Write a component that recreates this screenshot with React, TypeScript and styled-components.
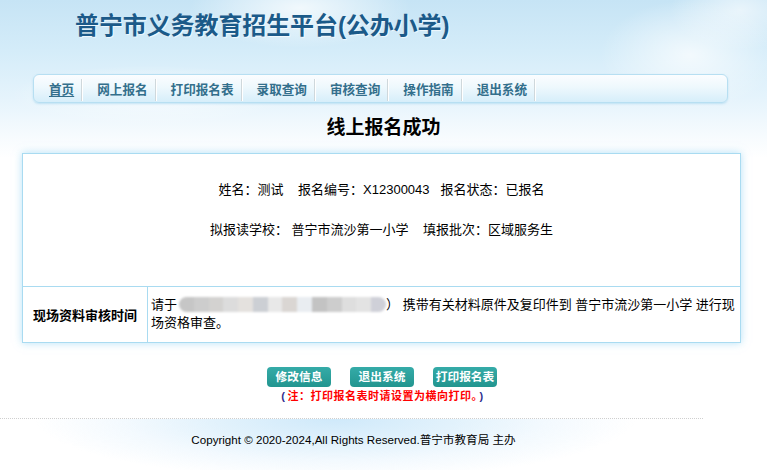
import React from "react";
import styled, { createGlobalStyle } from "styled-components";

const Global = createGlobalStyle`
  html, body { margin: 0; padding: 0; background: #fff; }
  body { font-family: "Liberation Sans", "Noto Sans CJK SC", sans-serif; color: #000; }
`;

const Page = styled.div`
  width: 767px;
  min-height: 470px;
  background:
    radial-gradient(ellipse 110px 40px at 300px 8px, rgba(255,255,255,0.75), rgba(255,255,255,0)),
    radial-gradient(ellipse 90px 55px at 690px 55px, rgba(255,255,255,0.7), rgba(255,255,255,0)),
    radial-gradient(ellipse 140px 30px at 150px 95px, rgba(255,255,255,0.6), rgba(255,255,255,0)),
    radial-gradient(ellipse 70px 40px at 740px 10px, rgba(255,255,255,0.6), rgba(255,255,255,0)),
    linear-gradient(to bottom, #c6e4f5 0px, #d4ecf9 50px, #e6f4fc 100px, #f6fbfe 135px, #ffffff 158px);
  display: flex;
  flex-direction: column;
`;

const Header = styled.header`
  padding: 11px 0 0 75px;
`;

const Title = styled.h1`
  margin: 0;
  font-size: 24px;
  line-height: 30px;
  font-weight: bold;
  color: #1b5a89;
  text-shadow: 1px 1px 1px rgba(255, 255, 255, 0.7);
  letter-spacing: -0.1px;
`;

const Nav = styled.nav`
  box-sizing: border-box;
  margin: 33px 39px 0 33px;
  height: 29px;
  border: 1px solid #b7dff2;
  border-radius: 6px;
  background: linear-gradient(to bottom, #fbfdff 0%, #eef8fd 45%, #d6eefa 100%);
  box-shadow: 0 1px 2px rgba(150, 205, 235, 0.5);
  display: flex;
  align-items: flex-start;
  padding-top: 4px;
`;

const NavItem = styled.a<{ $active?: boolean }>`
  box-sizing: border-box;
  height: 22px;
  display: flex;
  align-items: center;
  padding: 0 7px 3px 15px;
  border-right: 1px solid #cfd8dc;
  box-shadow: 1px 0 0 #ffffff;
  font-size: 12.6px;
  font-weight: bold;
  color: #336f8c;
  text-decoration: ${(p) => (p.$active ? "underline" : "none")};
  text-underline-offset: 2px;
  cursor: pointer;
  white-space: nowrap;
`;

const Heading = styled.h2`
  margin: 13px 0 0 0;
  text-align: center;
  font-size: 19px;
  line-height: 24px;
  font-weight: bold;
  color: #000;
`;

const Card = styled.section`
  margin: 13px 26px 0 22px;
  border: 1px solid #a9dbf1;
  background: #fff;
  box-shadow: 0 0 8px rgba(120, 200, 240, 0.55);
`;

const InfoBlock = styled.div`
  padding: 26px 0 46px;
  display: flex;
  flex-direction: column;
  align-items: center;
  gap: 20px;
  font-size: 13px;
  line-height: 20px;
`;

const InfoLine = styled.div`
  text-align: center;
  white-space: pre;
`;

const Row = styled.div`
  display: grid;
  grid-template-columns: 125px 1fr;
  border-top: 1px solid #a9dbf1;
  min-height: 55px;
`;

const LabelCell = styled.div`
  border-right: 1px solid #a9dbf1;
  display: flex;
  align-items: center;
  justify-content: center;
  font-size: 13px;
  font-weight: bold;
`;

const ValueCell = styled.div`
  padding: 9px 8px 10px 3px;
  font-size: 13px;
  line-height: 18px;
  white-space: nowrap;
`;

const Blur = styled.span`
  display: inline-flex;
  vertical-align: -3px;
  width: 207px;
  height: 15px;
  border-radius: 8px;
  overflow: hidden;
  filter: blur(0.8px);
  margin-left: 2px;
`;

const BlurSeg = styled.span<{ $shade: string }>`
  flex: 1;
  background: ${(p) => p.$shade};
`;

const Actions = styled.div`
  margin-top: 24px;
  display: flex;
  justify-content: center;
  gap: 19px;
  padding-right: 3px;
`;

const Button = styled.button`
  width: 64px;
  height: 20px;
  padding: 0;
  border: none;
  border-radius: 4px;
  background: linear-gradient(to bottom, #35aba8 0%, #22958f 100%);
  color: #fff;
  font-family: "Liberation Sans", "Noto Sans CJK SC", sans-serif;
  font-size: 11.7px;
  font-weight: bold;
  line-height: 20px;
  cursor: pointer;
`;

const Note = styled.p`
  margin: 2px 0 0;
  text-align: center;
  font-size: 11px;
  line-height: 14px;
  font-weight: bold;
  color: #ff0000;
  letter-spacing: 0.5px;
  padding-right: 2px;
`;

const Paren = styled.span`
  color: #2f2f8f;
  margin: 0 2px;
`;

const Footer = styled.footer`
  margin-top: 15px;
  width: 703px;
  height: 52px;
  border-top: 1px dotted #cfcfcf;
  background: radial-gradient(ellipse 300px 60px at 335px 0px, #cfe9fa 0%, #e2f2fc 40%, rgba(240, 248, 254, 0.8) 70%, rgba(255, 255, 255, 0) 100%);
  display: flex;
  justify-content: center;
  padding-top: 14px;
  box-sizing: content-box;
`;

const Copyright = styled.div`
  font-size: 11.6px;
  line-height: 14px;
  color: #000;
  padding-left: 4px;
`;

const shades = [
  "#c6c6c6", "#cdcdcd", "#d3d2d0", "#dcdcdc", "#e4e1de", "#cccfd4", "#e8e8e8",
  "#dad6d3", "#e9edf1", "#c3c3c3", "#cdcdcd", "#dedede", "#e3e3e3", "#cfd0d8",
];

const navItems = ["首页", "网上报名", "打印报名表", "录取查询", "审核查询", "操作指南", "退出系统"];

export default function App() {
  return (
    <>
      <Global />
      <Page>
        <Header>
          <Title>普宁市义务教育招生平台(公办小学)</Title>
        </Header>
        <Nav>
          {navItems.map((t, i) => (
            <NavItem key={t} $active={i === 0}>
              {t}
            </NavItem>
          ))}
        </Nav>
        <Heading>线上报名成功</Heading>
        <Card>
          <InfoBlock>
            <InfoLine>{"姓名：测试    报名编号：X12300043   报名状态：已报名"}</InfoLine>
            <InfoLine>{"拟报读学校： 普宁市流沙第一小学    填报批次：区域服务生"}</InfoLine>
          </InfoBlock>
          <Row>
            <LabelCell>现场资料审核时间</LabelCell>
            <ValueCell>
              请于
              <Blur>
                {shades.map((s, i) => (
                  <BlurSeg key={i} $shade={s} />
                ))}
              </Blur>
              ） 携带有关材料原件及复印件到 普宁市流沙第一小学 进行现
              <br />
              场资格审查。
            </ValueCell>
          </Row>
        </Card>
        <Actions>
          <Button>修改信息</Button>
          <Button>退出系统</Button>
          <Button>打印报名表</Button>
        </Actions>
        <Note>
          <Paren>(</Paren>注：打印报名表时请设置为横向打印。<Paren>)</Paren>
        </Note>
        <Footer>
          <Copyright>Copyright © 2020-2024,All Rights Reserved.普宁市教育局 主办</Copyright>
        </Footer>
      </Page>
    </>
  );
}
